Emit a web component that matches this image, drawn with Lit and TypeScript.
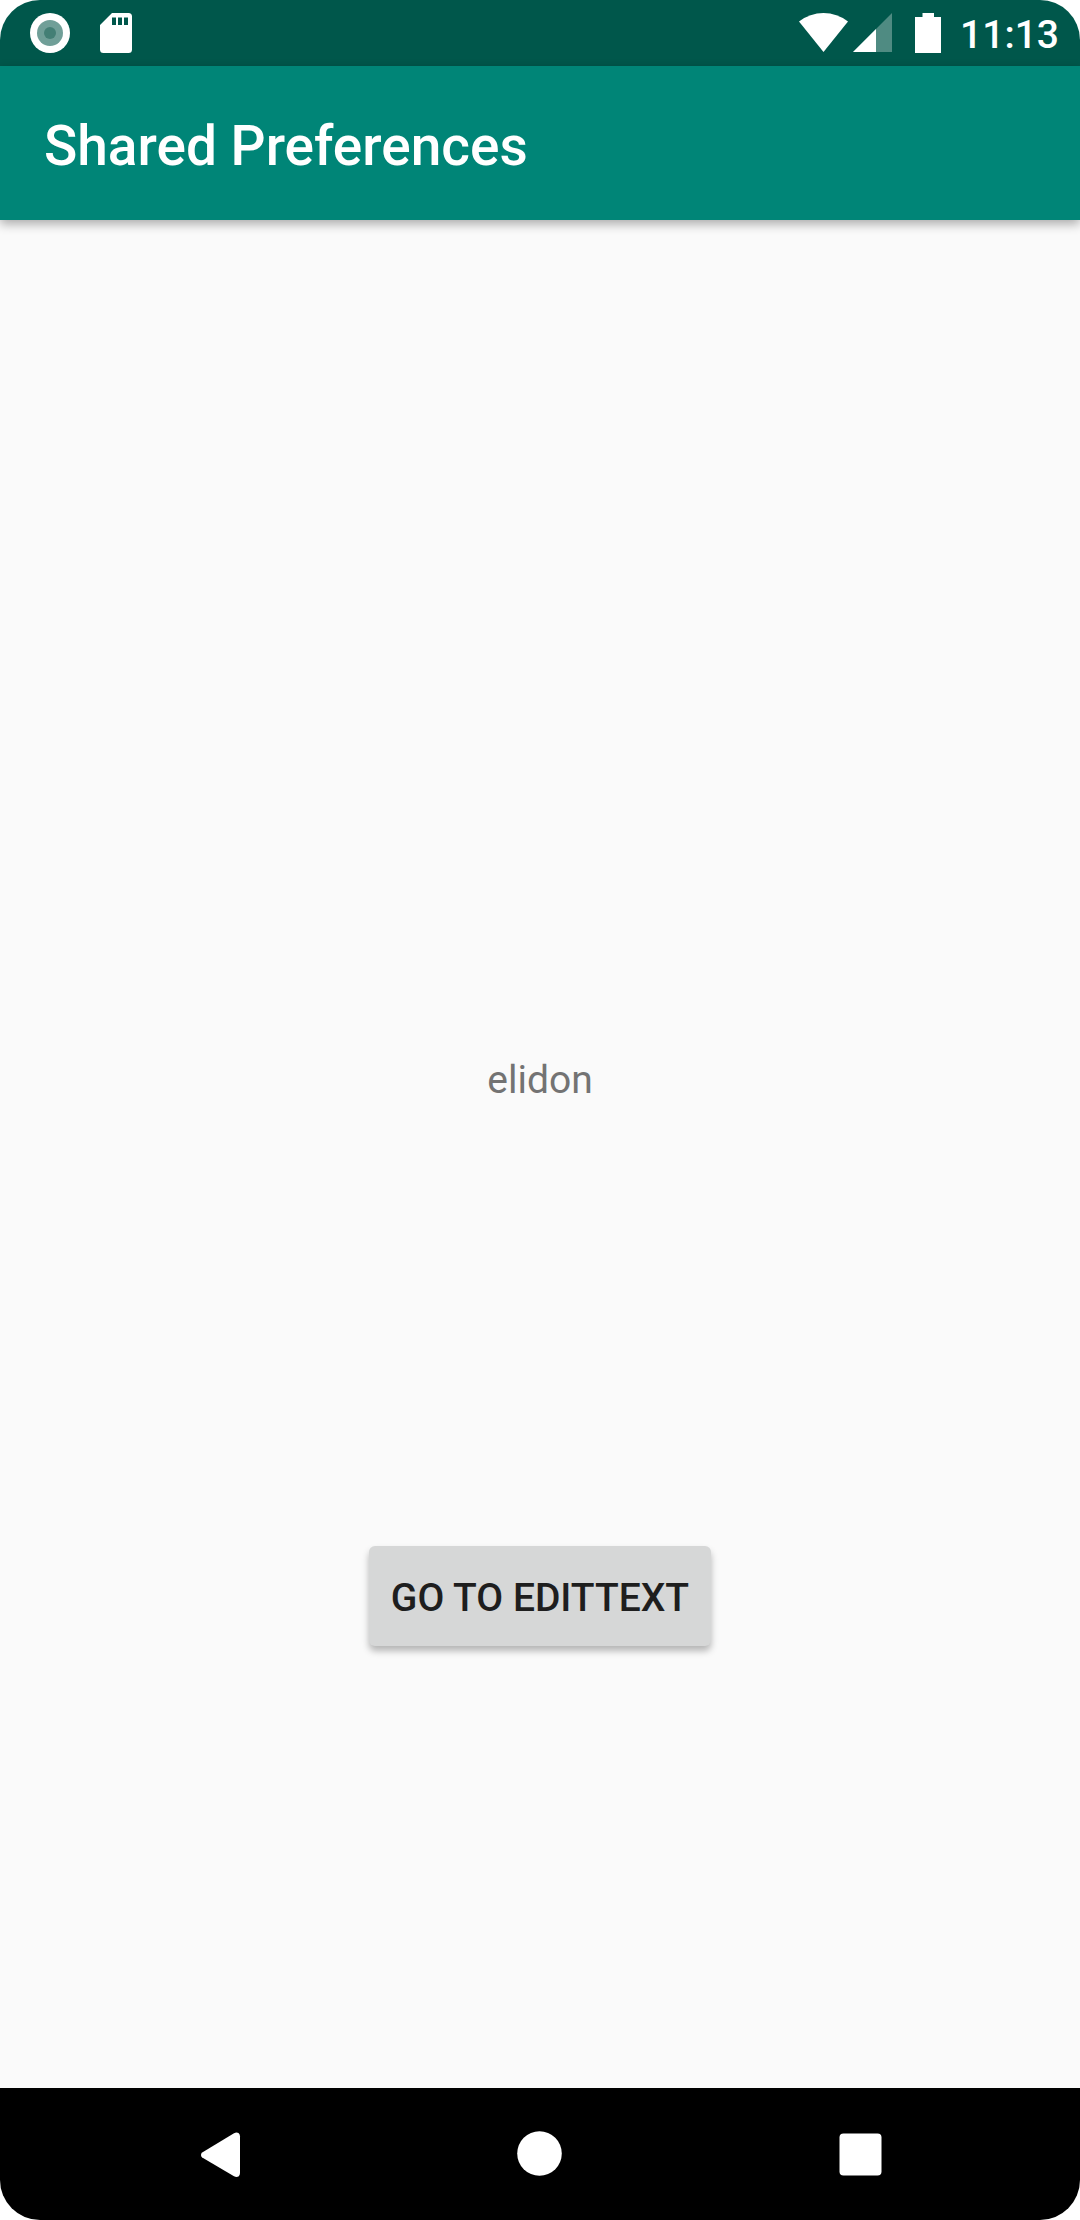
import { LitElement, html, css } from "lit";
import { customElement } from "lit/decorators.js";

@customElement("status-bar")
class StatusBar extends LitElement {
  static styles = css`
    :host {
      display: flex;
      align-items: center;
      justify-content: space-between;
      height: 66px;
      padding: 0 21px 0 30px;
      background: #00574b;
      color: #fff;
      font: 500 39px/52px Roboto, sans-serif;
    }
    .group {
      display: flex;
      align-items: center;
    }
    .left {
      gap: 30px;
    }
    .wifi {
      margin-right: 5px;
    }
    .cell {
      margin-right: 23px;
    }
    .battery {
      margin-right: 19px;
    }
    .clock {
      padding-top: 4px;
    }
    svg {
      display: block;
      fill: #fff;
    }
  `;

  render() {
    return html`
      <div class="group left">
        <svg width="40" height="40" viewBox="0 0 40 40" aria-hidden="true">
          <circle cx="20" cy="20" r="20" />
          <circle cx="20" cy="20" r="13" fill="#709f98" />
          <circle cx="20" cy="20" r="6" fill="#437f75" />
        </svg>
        <svg width="32" height="40" viewBox="0 0 32 40" aria-hidden="true">
          <path
            fill-rule="evenodd"
            d="M12 0H28.500Q32 0 32 3.500V36.500Q32 40 28.500 40H3.500Q0 40 0 36.500V12ZM12 4.500V12H16V4.500ZM18 4.500V12H22V4.500ZM24 4.500V12H28V4.500Z"
          />
        </svg>
      </div>
      <div class="group">
        <svg class="wifi" width="49" height="40" viewBox="0 0 49 40" aria-hidden="true">
          <path d="M24.500 39L0 8.500Q11 0 24.500 0T49 8.500Z" />
        </svg>
        <svg class="cell" width="39" height="40" viewBox="0 0 39 40" aria-hidden="true">
          <path d="M39 0V39H0Z" fill-opacity=".31" />
          <path d="M23 16V39H0Z" />
        </svg>
        <svg class="battery" width="26" height="40" viewBox="0 0 26 40" aria-hidden="true">
          <path d="M7.500 0H19V4H26V40H0V4H7.500Z" />
        </svg>
        <span class="clock">11:13</span>
      </div>
    `;
  }
}

@customElement("nav-bar")
class NavBar extends LitElement {
  static styles = css`
    :host {
      display: block;
      background: #000;
    }
    nav {
      display: flex;
      height: 132px;
      padding: 0 60px;
    }
    button {
      flex: 1;
      display: flex;
      align-items: center;
      justify-content: center;
      padding: 0;
      border: 0;
      background: none;
    }
    svg {
      fill: #fff;
    }
  `;

  render() {
    return html`
      <nav aria-label="System navigation">
        <button aria-label="Back">
          <svg width="46" height="46" viewBox="0 0 46 46">
            <path
              d="M5.200 21.600L37 2.200Q39.500 1 41.500 2Q43 3 43 5.500V42Q43 44.500 41.500 45.500Q39.500 46.500 37 45.300L5.200 26.400Q4 25.600 4 24Q4 22.400 5.200 21.600Z"
            />
          </svg>
        </button>
        <button aria-label="Home">
          <svg width="46" height="46" viewBox="0 0 46 46">
            <circle cx="22.500" cy="22.500" r="22.300" />
          </svg>
        </button>
        <button aria-label="Overview">
          <svg width="46" height="46" viewBox="0 0 46 46">
            <rect x="2.500" y="2.500" width="42" height="42" rx="4" />
          </svg>
        </button>
      </nav>
    `;
  }
}

@customElement("app-root")
class AppRoot extends LitElement {
  static styles = css`
    :host {
      display: block;
      background: #fff;
      font-family: Roboto, sans-serif;
    }
    .screen {
      display: flex;
      flex-direction: column;
      min-height: 100vh;
      border-radius: 40px;
      overflow: hidden;
      background: #fafafa;
    }
    .appbar {
      display: flex;
      align-items: center;
      box-sizing: border-box;
      height: 154px;
      padding: 6px 44px 0;
      background: #008577;
      box-shadow: 0 4px 10px rgba(0, 0, 0, 0.32);
    }
    h1 {
      margin: 0;
      color: #fff;
      font-size: 55px;
      font-weight: 500;
      line-height: 64px;
    }
    main {
      flex: 1;
      display: grid;
      grid-template-rows: 834fr auto 440fr auto 442fr;
      justify-items: center;
    }
    p {
      grid-row: 2;
      margin: 0;
      color: #737373;
      font-size: 39px;
      line-height: 52px;
    }
    .go {
      grid-row: 4;
      height: 100px;
      padding: 4px 22px 0;
      border: 0;
      border-radius: 6px;
      background: #d6d7d7;
      box-shadow: 0 5px 7px rgba(0, 0, 0, 0.28);
      color: #1e1e1e;
      font: 500 39px/52px Roboto, sans-serif;
      text-transform: uppercase;
    }
  `;

  render() {
    return html`
      <div class="screen">
        <status-bar></status-bar>
        <header class="appbar"><h1>Shared Preferences</h1></header>
        <main>
          <p>elidon</p>
          <button class="go">Go to EditText</button>
        </main>
        <nav-bar></nav-bar>
      </div>
    `;
  }
}
